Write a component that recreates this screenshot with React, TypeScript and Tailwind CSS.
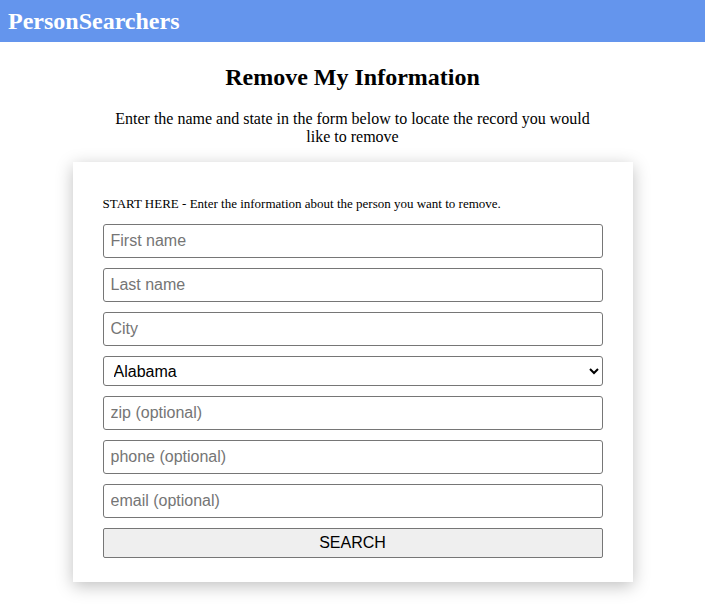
import { useState } from "react"

const states = [
  "Alabama", "Alaska", "Arizona", "Arkansas", "California", "Colorado", "Connecticut",
  "Delaware", "Florida", "Georgia", "Hawaii", "Idaho", "Illinois", "Indiana", "Iowa",
]

const fields = [
  { name: "first", placeholder: "First name" },
  { name: "last", placeholder: "Last name" },
  { name: "city", placeholder: "City" },
]

const optional = [
  { name: "zip", placeholder: "zip (optional)" },
  { name: "phone", placeholder: "phone (optional)" },
  { name: "email", placeholder: "email (optional)" },
]

const inputCls =
  "block w-full h-[34px] mb-[10px] px-[7px] border border-[#767676] rounded-[3px] bg-white text-[16px] text-black placeholder:text-[#757575] font-['Liberation_Sans',Arial,sans-serif] outline-none"

export default function App() {
  const [state, setState] = useState("Alabama")

  return (
    <div className="min-h-screen bg-white font-['Liberation_Serif','Times_New_Roman',serif] text-black">
      {/* Header */}
      <header className="h-[42px] bg-[#6495ed] flex items-center pl-2">
        <h1 className="text-[24px] font-bold text-white leading-none">PersonSearchers</h1>
      </header>

      <main className="flex flex-col items-center">
        <h2 className="mt-[21px] text-[24px] font-bold leading-[28px]">Remove My Information</h2>
        <p className="mt-[19px] max-w-[500px] text-center text-[16px] leading-[18px]">
          Enter the name and state in the form below to locate the record you would like to remove
        </p>

        <div className="mt-[16px] w-[560px] bg-white px-[30px] pt-[34px] pb-[24px] shadow-[0_4px_16px_rgba(0,0,0,0.25)]">
          <p className="text-[13px] leading-[15px] mb-[13px]">
            START HERE - Enter the information about the person you want to remove.
          </p>
          <form onSubmit={(e) => e.preventDefault()}>
            {fields.map((f) => (
              <input key={f.name} type="text" name={f.name} placeholder={f.placeholder} className={inputCls} />
            ))}
            <select
              value={state}
              onChange={(e) => setState(e.target.value)}
              className="block w-full h-[30px] mb-[10px] pl-[6px] border border-[#767676] rounded-[3px] bg-white text-[16px] text-black font-['Liberation_Sans',Arial,sans-serif]"
            >
              {states.map((s) => (
                <option key={s} value={s}>{s}</option>
              ))}
            </select>
            {optional.map((f) => (
              <input key={f.name} type="text" name={f.name} placeholder={f.placeholder} className={inputCls} />
            ))}
            <button
              type="submit"
              className="block w-full h-[30px] border border-[#767676] rounded-[2px] bg-[#efefef] text-[16px] text-black font-['Liberation_Sans',Arial,sans-serif]"
            >
              SEARCH
            </button>
          </form>
        </div>
      </main>
    </div>
  )
}
